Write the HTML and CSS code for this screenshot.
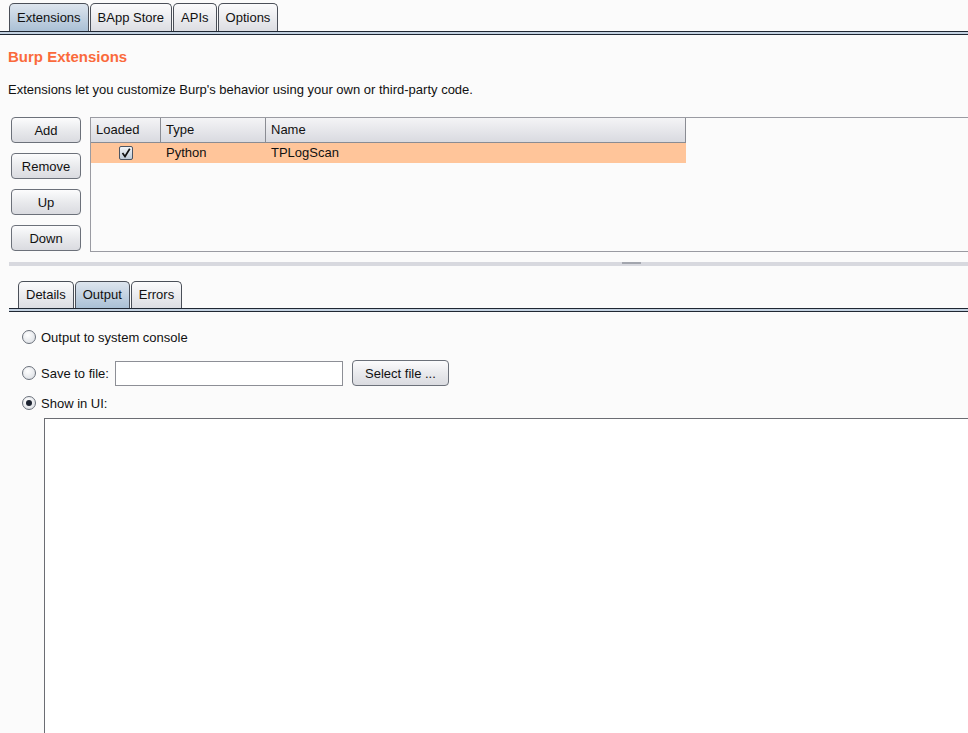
FILE: index.html
```html
<!DOCTYPE html>
<html lang="en">
<head>
    <meta charset="UTF-8">
    <title>Burp Extensions</title>
    <link rel="stylesheet" href="styles.css">
</head>
<body>
    <div class="tabs top-tabs">
        <div class="tab active">Extensions</div>
        <div class="tab">BApp Store</div>
        <div class="tab">APIs</div>
        <div class="tab">Options</div>
    </div>
    <div class="tab-rule"></div>

    <div class="header">
        <h1 class="title">Burp Extensions</h1>
        <p class="desc">Extensions let you customize Burp's behavior using your own or third-party code.</p>
    </div>

    <div class="ext-area">
        <div class="btn-col">
            <button class="btn side-btn">Add</button>
            <button class="btn side-btn">Remove</button>
            <button class="btn side-btn">Up</button>
            <button class="btn side-btn">Down</button>
        </div>
        <div class="table-box">
            <div class="row head">
                <div class="cell c-loaded">Loaded</div>
                <div class="cell c-type">Type</div>
                <div class="cell c-name">Name</div>
            </div>
            <div class="row selected">
                <div class="cell c-loaded center">
                    <span class="checkbox">
                        <svg width="10" height="10" viewBox="0 0 10 10"><path d="M1.5 5 L4 8.5 L8.8 0.8" fill="none" stroke="#111" stroke-width="1.7"/></svg>
                    </span>
                </div>
                <div class="cell c-type">Python</div>
                <div class="cell c-name">TPLogScan</div>
            </div>
        </div>
    </div>

    <div class="splitter"><span class="grip"></span></div>

    <div class="tabs sub-tabs">
        <div class="tab">Details</div>
        <div class="tab active">Output</div>
        <div class="tab">Errors</div>
    </div>
    <div class="tab-rule sub-rule"></div>

    <div class="output-opts">
        <label class="opt"><span class="radio"></span>Output to system console</label>
        <label class="opt file-opt"><span class="radio"></span>Save to file:
            <input class="file-input" type="text">
            <button class="btn select-btn">Select file ...</button>
        </label>
        <label class="opt show-opt"><span class="radio on"></span>Show in UI:</label>
        <div class="output-box"></div>
    </div>
</body>
</html>
```

FILE: styles.css
```css
body {
    margin: 0;
    background: #fbfbfb;
    font-family: "Liberation Sans", Arial, sans-serif;
    font-size: 13px;
    color: #111;
    overflow: hidden;
    height: 733px;
}

.tabs {
    display: flex;
    align-items: flex-end;
}

.top-tabs {
    padding: 3px 0 0 9px;
    height: 28px;
}

.tab {
    height: 27px;
    line-height: 27px;
    padding: 0 7px;
    border: 1px solid #4a4f58;
    border-bottom: none;
    border-radius: 5px 5px 0 0;
    background: linear-gradient(#fbfbfc, #dcdde2);
    margin-right: 1px;
    font-size: 13px;
}

.tab.active {
    background: linear-gradient(#dde5ee, #aac0d5);
}

.tab-rule {
    height: 2px;
    border-top: 1px solid #1f2733;
    border-bottom: 1px solid #1f2733;
    background: #c3d1e0;
}

.header {
    padding-left: 8px;
}

.title {
    margin: 12px 0 0;
    font-size: 15px;
    line-height: 20px;
    font-weight: bold;
    color: #fa6a3c;
}

.desc {
    margin: 15px 0 0;
    line-height: 16px;
    font-size: 13px;
}

.ext-area {
    display: flex;
    margin-top: 19px;
    padding-left: 11px;
}

.btn-col {
    display: flex;
    flex-direction: column;
    gap: 10px;
    width: 70px;
    margin-right: 9px;
}

.btn {
    font-family: "Liberation Sans", Arial, sans-serif;
    font-size: 13px;
    color: #111;
    border: 1px solid #6c717a;
    border-radius: 4px;
    background: linear-gradient(#fcfcfd, #e9eaed 50%, #dadbe0);
    padding: 0;
}

.side-btn {
    height: 26px;
}

.table-box {
    flex: 1;
    height: 133px;
    border: 1px solid #9a9ba2;
    border-right: none;
    background: #fbfbfb;
}

.row {
    display: flex;
    width: 595px;
}

.head {
    height: 24px;
    border-bottom: 1px solid #8a8c93;
    background: linear-gradient(#f4f4f6, #d9dae0);
}

.head .cell {
    line-height: 24px;
    border-right: 1px solid #8a8c93;
}

.selected {
    height: 20px;
    background: #ffc59a;
}

.selected .cell {
    line-height: 20px;
}

.cell {
    padding-left: 5px;
    box-sizing: border-box;
    font-size: 13px;
}

.c-loaded { width: 70px; }
.c-type { width: 105px; }
.c-name { width: 420px; }

.center {
    display: flex;
    align-items: center;
    justify-content: center;
    padding-left: 0;
}

.checkbox {
    display: inline-flex;
    align-items: center;
    justify-content: center;
    width: 12px;
    height: 12px;
    border: 1px solid #4c5563;
    border-radius: 2px;
    background: linear-gradient(#f2f5f8, #bfcbd8);
}

.splitter {
    margin: 10px 0 0 9px;
    height: 4px;
    background: #d8d9df;
    position: relative;
}

.grip {
    position: absolute;
    left: 613px;
    top: 0;
    width: 19px;
    height: 2px;
    background: #a3a6ae;
}

.sub-tabs {
    margin-top: 15px;
    padding-left: 18px;
    height: 27px;
}

.sub-tabs .tab {
    height: 26px;
    line-height: 26px;
    padding: 0 7px;
}

.sub-rule {
    margin-left: 9px;
}

.output-opts {
    padding: 17px 0 0 22px;
}

.opt {
    display: flex;
    align-items: center;
    height: 16px;
    font-size: 13px;
}

.file-opt {
    margin-top: 15px;
    height: 26px;
}

.show-opt {
    margin-top: 9px;
}

.radio {
    width: 12px;
    height: 12px;
    border: 1px solid #6a707a;
    border-radius: 50%;
    background: radial-gradient(circle at 40% 35%, #ffffff, #d6dae0);
    margin-right: 5px;
    display: inline-flex;
    align-items: center;
    justify-content: center;
}

.radio.on::after {
    content: "";
    width: 6px;
    height: 6px;
    border-radius: 50%;
    background: #1c2330;
}

.file-input {
    width: 228px;
    height: 25px;
    box-sizing: border-box;
    margin: 0 0 0 6px;
    border: 1px solid #8d8f96;
    background: #fff;
}

.select-btn {
    margin-left: 9px;
    width: 97px;
    height: 26px;
}

.output-box {
    margin: 7px 0 0 22px;
    height: 320px;
    border: 1px solid #6b6d73;
    border-right: none;
    background: #fff;
}
```
